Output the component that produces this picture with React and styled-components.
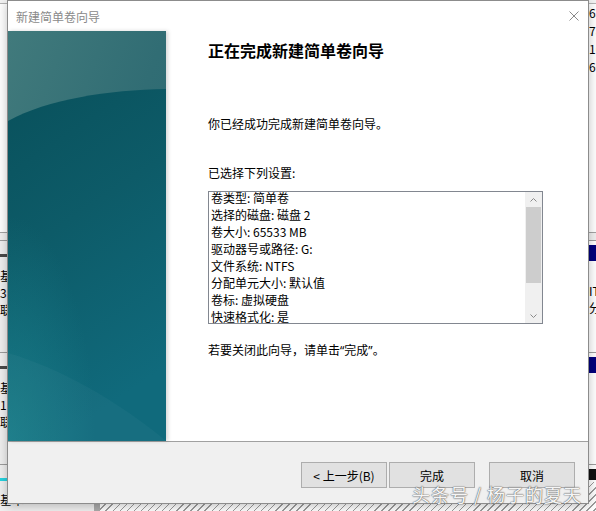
import React from "react";
import styled, { createGlobalStyle } from "styled-components";

const GlobalStyle = createGlobalStyle`
  html, body { margin: 0; padding: 0; background: #fff; }
  body {
    font-family: "Noto Sans CJK SC", "Noto Sans", sans-serif;
    font-size: 12px;
    color: #000;
  }
  #root { width: 596px; height: 511px; }
`;

/* ---------- console window behind the wizard ---------- */

const Desktop = styled.div`
  position: relative;
  width: 596px;
  height: 511px;
  overflow: hidden;
  background: #fff;
  display: flex;
  flex-direction: column;
`;

const VolumeList = styled.div`
  height: 232px;
  flex-shrink: 0;
  display: flex;
  flex-direction: column;
  background: #fff;
`;

const ListHeader = styled.div`
  height: 3px;
  border-bottom: 1px solid #b5b5b5;
  background: #f3f3f3;
`;

const ListRow = styled.div`
  height: 18px;
  line-height: 18px;
  display: grid;
  grid-template-columns: 1fr 7px;
  white-space: nowrap;
`;

const ListCell = styled.span`
  color: #000;
`;

const SplitBar = styled.div`
  height: 7px;
  flex-shrink: 0;
  background: #f0f0f0;
  border-top: 1px solid #a3a3a3;
`;

const DiskRow = styled.div`
  height: 112px;
  flex-shrink: 0;
  display: grid;
  grid-template-columns: 100px 1fr;
  border-top: 1px solid #9d9d9d;
  box-sizing: border-box;
`;

const DiskLabel = styled.div`
  background: #f0f0f0;
  border-right: 6px solid #ababab;
  padding-top: 13px;
  white-space: nowrap;
`;

const DiskIcon = styled.div`
  width: 8px;
  height: 3px;
  background: ${(p) => p.$color};
`;

const LabelLines = styled.div`
  margin-top: 10px;
  line-height: 17px;
`;

const Partitions = styled.div`
  display: flex;
  padding-top: 4px;
  background: #fff;
  min-width: 0;
`;

const Volume = styled.div`
  flex: ${(p) => (p.$width ? `0 0 ${p.$width}px` : "1 1 0")};
  min-width: 0;
  display: flex;
  flex-direction: column;
  white-space: nowrap;
`;

const VolumeBar = styled.div`
  height: ${(p) => p.$height}px;
  background: ${(p) => p.$color};
  flex-shrink: 0;
`;

const VolumeText = styled.div`
  margin-top: 4px;
  line-height: 17px;
`;

const Unallocated = styled.div`
  flex: 1;
  margin-top: 2px;
  background: repeating-linear-gradient(
    135deg,
    #ffffff 0px,
    #ffffff 4px,
    #9c9c9c 4px,
    #9c9c9c 5px
  );
`;

/* ---------- wizard dialog ---------- */

const Wizard = styled.section`
  position: absolute;
  left: 7px;
  top: 0;
  width: 582px;
  height: 504px;
  box-sizing: border-box;
  border: 1px solid #8c8c8c;
  background: #fff;
  box-shadow: 0 2px 10px rgba(0, 0, 0, 0.25);
  display: flex;
  flex-direction: column;
`;

const TitleBar = styled.header`
  height: 30px;
  flex-shrink: 0;
  display: flex;
  align-items: center;
  justify-content: space-between;
  padding: 0 9px 0 8px;
`;

const Title = styled.span`
  color: #8a8a8a;
  font-size: 12px;
`;

const CloseGlyph = styled.svg`
  display: block;
`;

const Body = styled.div`
  height: 410px;
  flex-shrink: 0;
  display: flex;
`;

const Banner = styled.div`
  width: 158px;
  flex-shrink: 0;
  position: relative;
  z-index: 1;
  box-shadow: 2px 0 4px rgba(0, 0, 0, 0.16);
  svg { display: block; }
`;

const Content = styled.div`
  flex: 1;
  display: flex;
  flex-direction: column;
  align-items: flex-start;
  padding: 8px 0 0 42px;
`;

const Heading = styled.h1`
  margin: 0;
  font-size: 16px;
  line-height: 22px;
  font-weight: 700;
`;

const Text = styled.p`
  margin: ${(p) => p.$top}px 0 0;
  font-size: 12px;
  line-height: 17px;
`;

const Quote = styled.span`
  font-family: "Noto Sans", sans-serif;
`;

const ListBox = styled.div`
  margin-top: 10px;
  width: 335px;
  height: 133px;
  box-sizing: border-box;
  border: 1px solid #828790;
  display: flex;
  overflow: hidden;
`;

const ListItems = styled.div`
  flex: 1;
  padding-left: 2px;
  overflow: hidden;
`;

const ListItemsInner = styled.div`
  margin-top: -3px;
  line-height: 17px;
  white-space: nowrap;
`;

const ScrollBar = styled.div`
  width: 17px;
  flex-shrink: 0;
  background: #f0f0f0;
  display: flex;
  flex-direction: column;
  align-items: center;
`;

const ScrollArrow = styled.div`
  height: 15px;
  width: 17px;
  display: flex;
  align-items: center;
  justify-content: center;
  flex-shrink: 0;
  margin-top: ${(p) => (p.$bottom ? "auto" : "0")};
`;

const ScrollThumb = styled.div`
  width: 15px;
  height: 76px;
  background: #cdcdcd;
`;

const Footer = styled.footer`
  flex: 1;
  background: #f0f0f0;
  border-top: 1px solid #a0a0a0;
  display: flex;
  justify-content: flex-end;
  align-items: flex-start;
  padding: 20px 13px 0 0;
`;

const Button = styled.button`
  width: 86px;
  height: 26px;
  margin-left: ${(p) => p.$gap}px;
  box-sizing: border-box;
  border: 1px solid #adadad;
  background: #e1e1e1;
  font-family: "Noto Sans CJK SC", "Noto Sans", sans-serif;
  font-size: 12px;
  color: #000;
  padding: 0;
`;

const Watermark = styled.div`
  position: absolute;
  left: 412px;
  top: 483px;
  font-family: "Noto Sans CJK SC", sans-serif;
  font-size: 18px;
  line-height: 22px;
  letter-spacing: 1px;
  color: rgba(255, 255, 255, 0.95);
  text-shadow: 0 0 1px #6a6a6a, 0 0 1px #6a6a6a, 0 0 2px rgba(0, 0, 0, 0.35);
  white-space: nowrap;
`;

const summary = [
  "卷类型: 简单卷",
  "选择的磁盘: 磁盘 2",
  "卷大小: 65533 MB",
  "驱动器号或路径: G:",
  "文件系统: NTFS",
  "分配单元大小: 默认值",
  "卷标: 虚拟硬盘",
  "快速格式化: 是",
];

const volumeRows = ["65.53 GB", "78.12 GB", "100 MB", "60.00 GB"];

const Chevron = ({ down }) => (
  <svg width="7" height="4" viewBox="0 0 7 4">
    <polyline
      points={down ? "0.5,0.5 3.5,3.5 6.5,0.5" : "0.5,3.5 3.5,0.5 6.5,3.5"}
      fill="none"
      stroke="#8a8a8a"
      strokeWidth="1"
    />
  </svg>
);

const BannerArt = () => (
  <svg width="158" height="410" viewBox="0 0 158 410">
    <defs>
      <linearGradient id="bannerSky" x1="0" y1="0" x2="1" y2="1">
        <stop offset="0" stopColor="#417a7c" />
        <stop offset="0.5" stopColor="#316d74" />
        <stop offset="1" stopColor="#276670" />
      </linearGradient>
      <linearGradient id="bannerSea" x1="0" y1="0" x2="0.3" y2="1">
        <stop offset="0" stopColor="#09515c" />
        <stop offset="0.45" stopColor="#0d5b68" />
        <stop offset="1" stopColor="#106a7c" />
      </linearGradient>
      <radialGradient id="bannerGlow" cx="0" cy="1" r="0.55">
        <stop offset="0" stopColor="#1f8b95" stopOpacity="0.55" />
        <stop offset="1" stopColor="#1f8b95" stopOpacity="0" />
      </radialGradient>
    </defs>
    <rect width="158" height="410" fill="url(#bannerSky)" />
    <path d="M0 90 C 40 68, 100 59, 158 58 L158 410 L0 410 Z" fill="url(#bannerSea)" />
    <rect width="158" height="410" fill="url(#bannerGlow)" />
    <path d="M0 322 C 50 336, 110 370, 158 410 L0 410 Z" fill="#ffffff" opacity="0.03" />
  </svg>
);

export default function App() {
  return (
    <>
      <GlobalStyle />
      <Desktop>
        <VolumeList>
          <ListHeader />
          {volumeRows.map((size) => (
            <ListRow key={size}>
              <span />
              <ListCell>{size}</ListCell>
            </ListRow>
          ))}
        </VolumeList>
        <SplitBar />
        <DiskRow>
          <DiskLabel>
            <DiskIcon $color="#4a4a4a" />
            <LabelLines>
              <div>基本</div>
              <div>39.88 GB</div>
              <div>联机</div>
            </LabelLines>
          </DiskLabel>
          <Partitions>
            <Volume>
              <VolumeBar $color="#00007c" $height={16} />
            </Volume>
            <Volume $width={7}>
              <VolumeBar $color="#00007c" $height={16} />
              <VolumeText>
                <div>&nbsp;</div>
                <div>IT</div>
                <div>分区</div>
              </VolumeText>
            </Volume>
          </Partitions>
        </DiskRow>
        <DiskRow>
          <DiskLabel>
            <DiskIcon $color="#4a4a4a" />
            <LabelLines>
              <div>基本</div>
              <div>119.24 GB</div>
              <div>联机</div>
            </LabelLines>
          </DiskLabel>
          <Partitions>
            <Volume>
              <VolumeBar $color="#00007c" $height={16} />
            </Volume>
          </Partitions>
        </DiskRow>
        <DiskRow>
          <DiskLabel>
            <DiskIcon $color="#27d3e0" />
            <LabelLines>
              <div>基本</div>
              <div>64.00 GB</div>
              <div>联机</div>
            </LabelLines>
          </DiskLabel>
          <Partitions>
            <Volume>
              <VolumeBar $color="#101010" $height={11} />
              <Unallocated />
            </Volume>
          </Partitions>
        </DiskRow>

        <Wizard>
          <TitleBar>
            <Title>新建简单卷向导</Title>
            <CloseGlyph width="10" height="10" viewBox="0 0 10 10">
              <path d="M0.5 0.5 L9.5 9.5 M9.5 0.5 L0.5 9.5" stroke="#8a8a8a" strokeWidth="1" />
            </CloseGlyph>
          </TitleBar>
          <Body>
            <Banner>
              <BannerArt />
            </Banner>
            <Content>
              <Heading>正在完成新建简单卷向导</Heading>
              <Text $top={54}>你已经成功完成新建简单卷向导。</Text>
              <Text $top={32}>已选择下列设置:</Text>
              <ListBox>
                <ListItems>
                  <ListItemsInner>
                    {summary.map((line) => (
                      <div key={line}>{line}</div>
                    ))}
                  </ListItemsInner>
                </ListItems>
                <ScrollBar>
                  <ScrollArrow>
                    <Chevron />
                  </ScrollArrow>
                  <ScrollThumb />
                  <ScrollArrow $bottom>
                    <Chevron down />
                  </ScrollArrow>
                </ScrollBar>
              </ListBox>
              <Text $top={17}>
                若要关闭此向导，请单击<Quote>“</Quote>完成<Quote>”</Quote>。
              </Text>
            </Content>
          </Body>
          <Footer>
            <Button $gap={0}>&lt; 上一步(B)</Button>
            <Button $gap={2}>完成</Button>
            <Button $gap={14}>取消</Button>
          </Footer>
        </Wizard>

        <Watermark>头条号 / 杨子的夏天</Watermark>
      </Desktop>
    </>
  );
}
